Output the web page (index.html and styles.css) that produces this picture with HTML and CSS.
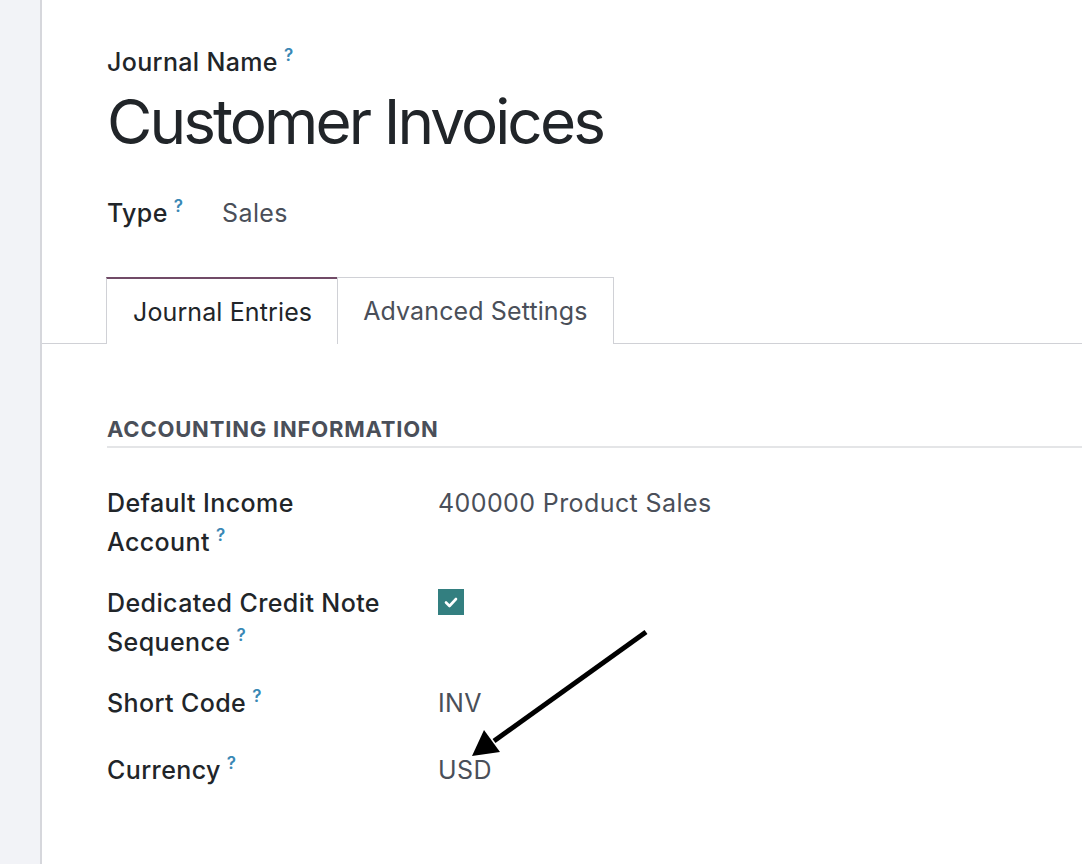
FILE: index.html
```html
<!DOCTYPE html>
<html>
<head>
<meta charset="utf-8">
<link rel="stylesheet" href="styles.css">
</head>
<body>
<div class="app">
  <aside class="sidebar"></aside>
  <main class="sheet">
    <div class="title-block">
      <div class="field-label">Journal Name<sup class="help">?</sup></div>
      <h1 class="title">Customer Invoices</h1>
    </div>
    <div class="type-row">
      <span class="type-label">Type<sup class="help">?</sup></span>
      <span class="value">Sales</span>
    </div>
    <div class="tabs">
      <div class="tab active">Journal Entries</div>
      <div class="tab">Advanced Settings</div>
    </div>
    <section class="group">
      <h2 class="group-title">ACCOUNTING INFORMATION</h2>
      <div class="rows">
        <div class="row">
          <div class="label">Default Income<br>Account<sup class="help">?</sup></div>
          <div class="value">400000 Product Sales</div>
        </div>
        <div class="row">
          <div class="label">Dedicated Credit Note<br>Sequence<sup class="help">?</sup></div>
          <div class="value"><span class="checkbox"><svg viewBox="0 0 26 26" width="26" height="26"><path d="M8 13.5 L11.5 17 L18 10" fill="none" stroke="#fff" stroke-width="2.6" stroke-linecap="round" stroke-linejoin="round"/></svg></span></div>
        </div>
        <div class="row">
          <div class="label">Short Code<sup class="help">?</sup></div>
          <div class="value">INV</div>
        </div>
        <div class="row last">
          <div class="label">Currency<sup class="help">?</sup></div>
          <div class="value">USD</div>
        </div>
      </div>
    </section>
  </main>
</div>
<svg class="arrow" width="1082" height="864" viewBox="0 0 1082 864">
  <line x1="646" y1="632" x2="494" y2="741" stroke="#000" stroke-width="5"/>
  <polygon points="472,756 484,730 500,752" fill="#000"/>
</svg>
</body>
</html>
```
FILE: styles.css
```css
html, body {
  margin: 0;
  padding: 0;
  background: #fff;
}
body {
  font-family: Inter, Roboto, "Liberation Sans", sans-serif;
  color: #212529;
  width: 1082px;
  height: 864px;
  overflow: hidden;
  position: relative;
}
.app {
  display: flex;
  height: 864px;
}
.sidebar {
  width: 40px;
  flex: none;
  background: #f2f3f7;
  border-right: 2px solid #d6d7dc;
}
.sheet {
  flex: 1;
  padding-top: 47px;
  min-width: 0;
}
.title-block {
  padding-left: 65px;
}
.field-label {
  font-size: 25px;
  font-weight: 500;
  line-height: 30px;
  letter-spacing: 0.35px;
}
.help {
  color: #3a88b5;
  font-size: 17px;
  font-weight: 600;
  vertical-align: top;
  position: relative;
  top: -7px;
  margin-left: 6px;
  letter-spacing: 0;
}
.title {
  margin: 7px 0 0;
  font-size: 62px;
  font-weight: 400;
  line-height: 76px;
  letter-spacing: -2.9px;
}
.type-row {
  padding-left: 65px;
  margin-top: 38px;
  display: flex;
  align-items: baseline;
  line-height: 30px;
}
.type-label {
  font-size: 25px;
  font-weight: 500;
  width: 115px;
  letter-spacing: 0.35px;
}
.value {
  font-size: 25px;
  color: #4a4f59;
  letter-spacing: 0.4px;
}
.tabs {
  margin-top: 49px;
  padding-left: 64px;
  display: flex;
  border-bottom: 1px solid #d0d1d6;
  height: 66px;
}
.tab {
  box-sizing: border-box;
  height: 67px;
  padding: 0 25px 0 25px;
  display: flex;
  align-items: center;
  font-size: 25px;
  letter-spacing: 0.12px;
  color: #4a4f59;
  border: 1px solid #d0d1d6;
  border-bottom: none;
  background: #fff;
}
.tab.active {
  color: #212529;
  border-top: 2px solid #714b67;
  border-right: none;
  padding: 0 25px 0 26px;
}
.group {
  padding-left: 65px;
  margin-top: 71px;
}
.group-title {
  margin: 0;
  font-size: 22px;
  font-weight: 700;
  color: #4a4f59;
  letter-spacing: 0.8px;
  line-height: 28px;
  padding-bottom: 3px;
  border-bottom: 2px solid #e4e5e7;
}
.rows {
  margin-top: 36px;
  display: flex;
  flex-direction: column;
  gap: 22px;
}
.row {
  display: grid;
  grid-template-columns: 331px 1fr;
  line-height: 39px;
}
.row.last {
  margin-top: 6px;
}
.label {
  font-size: 25px;
  font-weight: 500;
  color: #212529;
  letter-spacing: 0.4px;
}
.checkbox {
  display: inline-block;
  width: 26px;
  height: 26px;
  background: #337f80;
  vertical-align: middle;
  position: relative;
  top: -3px;
}
.checkbox svg {
  display: block;
}
.arrow {
  position: absolute;
  left: 0;
  top: 0;
  pointer-events: none;
}
```
